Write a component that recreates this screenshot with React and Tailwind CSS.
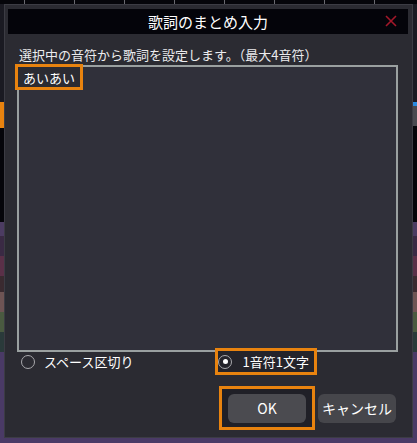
import React from "react";

const font = { fontFamily: '"Noto Sans CJK JP", "Noto Sans", sans-serif' };

function Background() {
  const ticks = [25, 75, 125, 173, 223, 273, 325, 373];
  return (
    <div className="w-[417px] h-[443px] bg-[#05050a] flex flex-col">
      <div className="h-[4px] flex">
        {ticks.map((x, i) => (
          <div key={i} className="h-full w-[1px] bg-[#6a6a70] ml-[49px] first:ml-[24px]" />
        ))}
      </div>
      <div className="flex-1 flex justify-between">
        <div className="w-[4px] flex flex-col">
          <div className="h-[98px] bg-[#1a1a22]" />
          <div className="h-[26px] bg-[#e8830f]" />
          <div className="h-[94px] bg-[#05050a]" />
          <div className="h-[14px] bg-[#4c3c62]" />
          <div className="h-[20px] bg-[#3a2a44]" />
          <div className="h-[20px] bg-[#5a3048]" />
          <div className="h-[16px] bg-[#3a2a30]" />
          <div className="h-[20px] bg-[#6e5454]" />
          <div className="h-[20px] bg-[#4a5a40]" />
          <div className="h-[20px] bg-[#2a3a3a]" />
          <div className="flex-1 bg-[#4a3a66]" />
        </div>
        <div className="w-[4px] flex flex-col">
          <div className="h-[98px] bg-[#1a1a22]" />
          <div className="h-[4px] bg-[#2a8ae0]" />
          <div className="h-[20px] bg-[#4a4a50]" />
          <div className="h-[96px] bg-[#05050a]" />
          <div className="h-[14px] bg-[#4c3c62]" />
          <div className="h-[20px] bg-[#3a2a44]" />
          <div className="h-[20px] bg-[#5a3048]" />
          <div className="h-[16px] bg-[#3a2a30]" />
          <div className="h-[20px] bg-[#6e5454]" />
          <div className="h-[20px] bg-[#4a5a40]" />
          <div className="h-[20px] bg-[#2a3a3a]" />
          <div className="flex-1 bg-[#4a3a66]" />
        </div>
      </div>
      <div className="h-[5px] bg-[#4a3a66]" />
    </div>
  );
}

function Radio({ checked }) {
  return (
    <span className="w-[14px] h-[14px] rounded-full border-[1.5px] border-[#a8a8ac] flex items-center justify-center shrink-0">
      {checked && <span className="w-[5px] h-[5px] rounded-full bg-white" />}
    </span>
  );
}

export default function App() {
  return (
    <div className="relative w-[417px] h-[443px] overflow-hidden" style={font}>
      <Background />

      <div className="absolute left-[4px] top-[4px] w-[409px] h-[434px] bg-[#2b2b32] border border-[#3c3c44] pt-[4px] pl-[3px] pr-[4px] flex flex-col">
        <div className="h-[25px] bg-[#04040a] flex items-center justify-center relative">
          <span className="text-[15px] text-white leading-none">歌詞のまとめ入力</span>
          <svg className="absolute right-[11px] top-[6px]" width="12" height="12" viewBox="0 0 12 12">
            <path d="M1 1 L11 11 M11 1 L1 11" stroke="#a3182a" strokeWidth="1.6" />
          </svg>
        </div>

        <div className="mt-[13px] ml-[11px] text-[13px] leading-[16px] text-[#ececee] whitespace-nowrap">
          選択中の音符から歌詞を設定します。（最大4音符）
        </div>

        <div className="relative mt-[2px] ml-[9px] w-[381px] h-[287px] border-2 border-[#9aa0a0] bg-[#30303a]">
          <div className="absolute left-[-4px] top-[-3px] h-[26px] border-[3px] border-[#e8830f] bg-[#2b2b32] px-[5px] flex items-center">
            <span className="text-[13px] text-white leading-none">あいあい</span>
          </div>
        </div>

        <div className="flex items-center mt-[-4px] h-[27px] relative">
          <div className="flex items-center ml-[13px]">
            <Radio />
            <span className="ml-[9px] text-[13px] text-white">スペース区切り</span>
          </div>
          <div className="flex items-center ml-[82px] h-[27px] border-[3px] border-[#e8830f] bg-[#24242b] pr-[5px]">
            <Radio checked />
            <span className="ml-[10px] text-[13px] text-white">1音符1文字</span>
          </div>
        </div>

        <div className="flex items-start mt-[11px]">
          <div className="ml-[211px] border-[3px] border-[#e8830f] bg-[#202027] pt-[5px] pb-[4px] px-[6px]">
            <button className="w-[78px] h-[29px] rounded-[6px] bg-[#4b4b50] text-white text-[14px]">OK</button>
          </div>
          <button className="ml-[3px] mt-[8px] w-[78px] h-[29px] rounded-[6px] bg-[#46464b] text-white text-[14px]">
            キャンセル
          </button>
        </div>
      </div>
    </div>
  );
}
